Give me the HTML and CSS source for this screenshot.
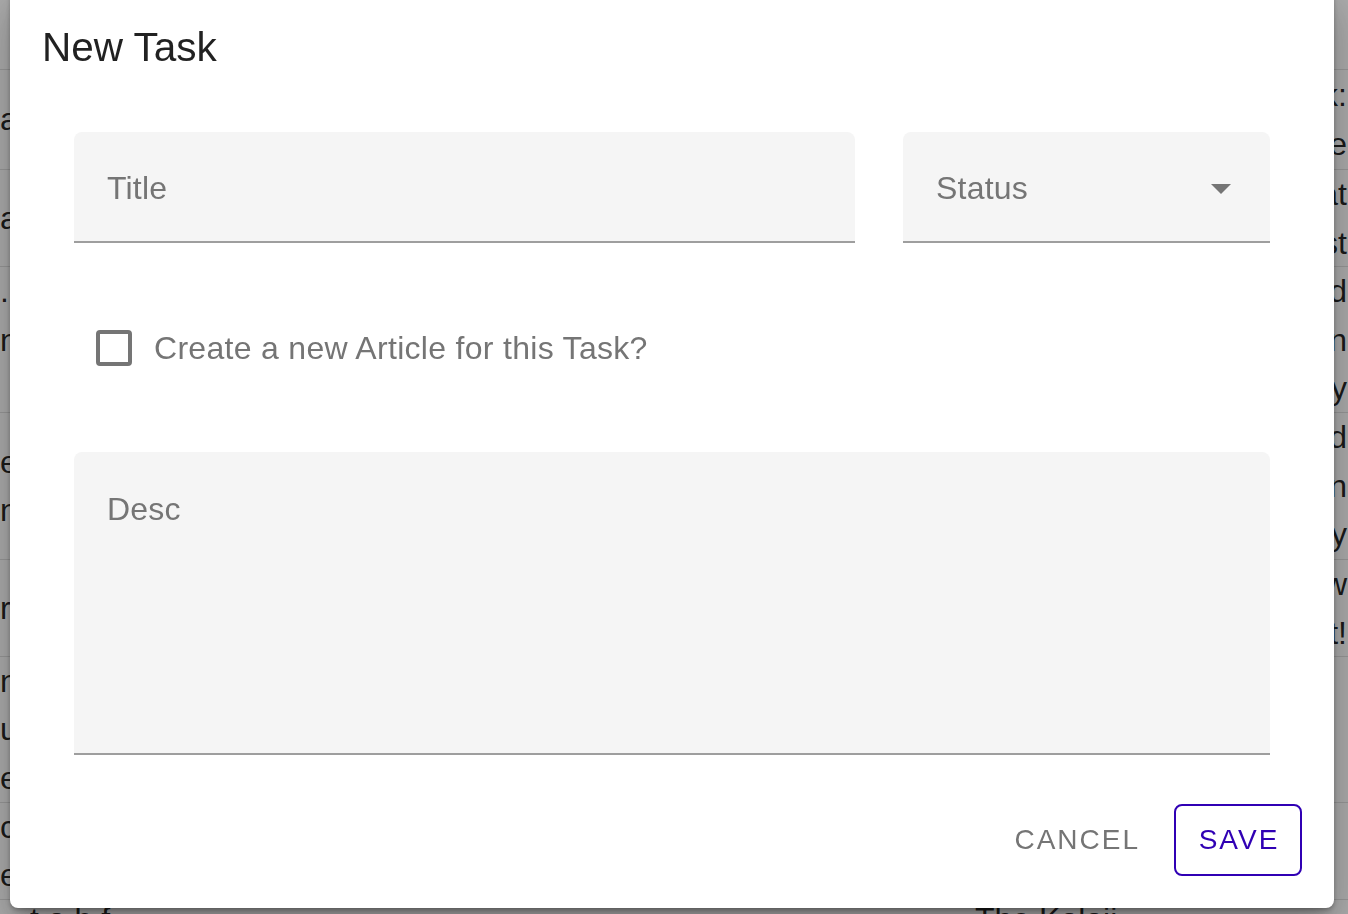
FILE: index.html
```html
<!DOCTYPE html>
<html lang="en">
<head>
<meta charset="utf-8">
<title>New Task</title>
<link rel="stylesheet" href="styles.css">
</head>
<body>
<div class="page">
  <div class="row row-head"></div>
  <div class="row row-100">
    <div class="cell-l"><span>at</span></div>
    <div class="cell-r"><span>k:</span><span>e</span></div>
  </div>
  <div class="row row-97">
    <div class="cell-l"><span>a</span></div>
    <div class="cell-r"><span>at</span><span>st</span></div>
  </div>
  <div class="row row-146">
    <div class="cell-l"><span>.</span><span>n</span><span>&nbsp;</span></div>
    <div class="cell-r"><span>d</span><span>n</span><span>y</span></div>
  </div>
  <div class="row row-147">
    <div class="cell-l"><span>e</span><span>n</span></div>
    <div class="cell-r"><span>d</span><span>n</span><span>y</span></div>
  </div>
  <div class="row row-97">
    <div class="cell-l"><span>r</span></div>
    <div class="cell-r"><span>w</span><span>t!</span></div>
  </div>
  <div class="row row-146">
    <div class="cell-l"><span>n</span><span>u</span><span>e</span></div>
    <div class="cell-r"></div>
  </div>
  <div class="row row-97">
    <div class="cell-l"><span>c</span><span>e</span></div>
    <div class="cell-r"></div>
  </div>
  <div class="row row-last">
    <div class="cell-wide"><span class="frag-a">t a b  f</span><span class="frag-b">The Kalaji</span></div>
  </div>
</div>

<div class="backdrop"></div>

<div class="dialog" role="dialog" aria-labelledby="dlg-title">
  <h2 class="dialog-title" id="dlg-title">New Task</h2>
  <div class="dialog-content">
    <div class="field-row">
      <div class="field field-title"><span class="field-label">Title</span></div>
      <div class="field field-status">
        <span class="field-label">Status</span>
        <svg class="arrow" width="20" height="10" viewBox="0 0 20 10" aria-hidden="true"><path d="M0 0 L20 0 L10 10 Z" fill="#757575"/></svg>
      </div>
    </div>
    <label class="check-row">
      <span class="check-box"></span>
      <span class="check-label">Create a new Article for this Task?</span>
    </label>
    <div class="field field-desc"><span class="field-label">Desc</span></div>
  </div>
  <div class="actions">
    <button class="btn btn-text" type="button">CANCEL</button>
    <button class="btn btn-outlined" type="button">SAVE</button>
  </div>
</div>
</body>
</html>
```

FILE: styles.css
```css
html, body {
  margin: 0;
  padding: 0;
  width: 1348px;
  height: 914px;
  overflow: hidden;
  background: #ffffff;
  font-family: "Liberation Sans", Arial, Helvetica, sans-serif;
}

/* ---------- background page ---------- */
.page {
  width: 1348px;
  color: rgba(0, 0, 0, 0.87);
  font-size: 32px;
}

.row {
  display: grid;
  grid-template-columns: 1fr auto;
  align-items: center;
  border-bottom: 1px solid #e0e0e0;
  box-sizing: border-box;
  overflow: hidden;
}

.row-head { height: 70px; }
.row-100 { height: 100px; }
.row-97 { height: 97px; }
.row-146 { height: 146px; }
.row-147 { height: 147px; }
.row-last {
  height: 150px;
  border-bottom: none;
  display: block;
}

.cell-l, .cell-r {
  display: flex;
  flex-direction: column;
  line-height: 48.5px;
  white-space: nowrap;
}

.cell-l {
  overflow: hidden;
  align-items: flex-start;
}

.cell-r {
  align-items: flex-end;
  padding-right: 1px;
}

.cell-wide {
  display: grid;
  grid-template-columns: 975px auto;
  line-height: 38px;
  white-space: nowrap;
}

.frag-a { padding-left: 30px; }

/* ---------- backdrop ---------- */
.backdrop {
  position: fixed;
  inset: 0;
  background: rgba(0, 0, 0, 0.325);
}

/* ---------- dialog ---------- */
.dialog {
  position: fixed;
  top: -10px;
  left: 10px;
  width: 1324px;
  box-sizing: border-box;
  background: #ffffff;
  border-radius: 8px;
  padding: 34px 0 32px 0;
  box-shadow:
    0 11px 15px -7px rgba(0, 0, 0, 0.2),
    0 24px 38px 3px rgba(0, 0, 0, 0.14),
    0 9px 46px 8px rgba(0, 0, 0, 0.12),
    0 2px 4px rgba(0, 0, 0, 0.25);
  display: flex;
  flex-direction: column;
}

.dialog-title {
  margin: 0;
  padding-left: 32px;
  font-size: 40.5px;
  line-height: 47px;
  font-weight: 400;
  color: rgba(0, 0, 0, 0.87);
}

.dialog-content {
  padding: 0 64px;
  display: flex;
  flex-direction: column;
}

.field-row {
  margin-top: 61px;
  display: grid;
  grid-template-columns: 1fr 367px;
  column-gap: 48px;
}

.field {
  background: #f5f5f5;
  border-radius: 8px 8px 0 0;
  border-bottom: 2px solid #9e9e9e;
  box-sizing: border-box;
  height: 111px;
  padding: 40px 39px 0 33px;
  display: flex;
  align-items: flex-start;
}

.field-label {
  font-size: 32px;
  line-height: 32px;
  letter-spacing: 0.2px;
  color: #757575;
}

.field-status .arrow {
  margin-left: auto;
  margin-top: 12px;
  display: block;
}

.check-row {
  margin-top: 87px;
  margin-left: 22px;
  display: flex;
  align-items: center;
  height: 36px;
}

.check-box {
  width: 36px;
  height: 36px;
  box-sizing: border-box;
  border: 4px solid #757575;
  border-radius: 4px;
  flex: none;
}

.check-label {
  margin-left: 22px;
  font-size: 32px;
  line-height: 36px;
  letter-spacing: 0.3px;
  color: #757575;
}

.field-desc {
  margin-top: 86px;
  height: 303px;
  padding-top: 41px;
}

/* ---------- actions ---------- */
.actions {
  margin-top: 49px;
  padding-right: 32px;
  display: flex;
  justify-content: flex-end;
  align-items: center;
  column-gap: 12px;
}

.btn {
  font-family: "Liberation Sans", Arial, Helvetica, sans-serif;
  font-size: 28px;
  letter-spacing: 2px;
  font-weight: 400;
  height: 72px;
  box-sizing: border-box;
  background: transparent;
  border-radius: 8px;
  cursor: pointer;
  margin: 0;
}

.btn-text {
  border: none;
  color: #757575;
  padding: 0 22px;
}

.btn-outlined {
  border: 2px solid #3000b4;
  color: #3000b4;
  width: 128px;
  padding: 0;
  text-indent: 2px;
}
```
